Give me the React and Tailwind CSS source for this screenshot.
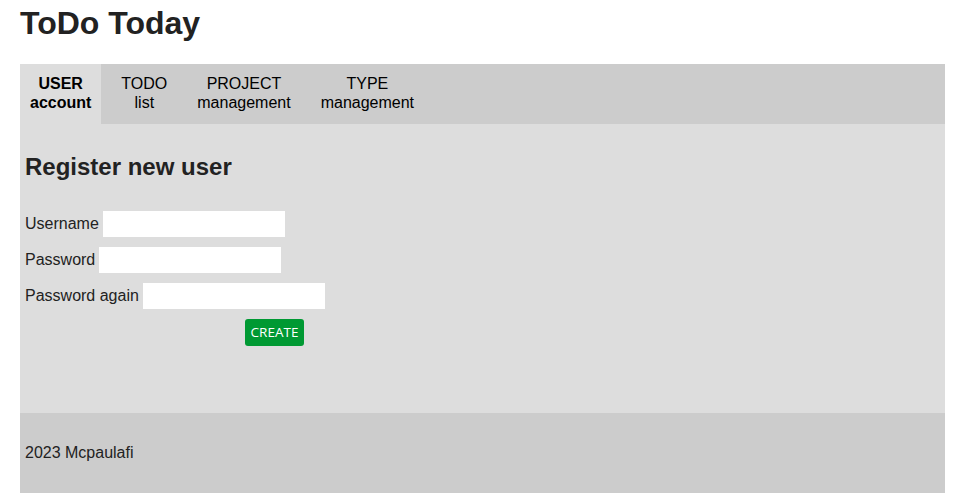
import React, { useState } from "react";

const tabs = [
  { top: "USER", bottom: "account" },
  { top: "TODO", bottom: "list" },
  { top: "PROJECT", bottom: "management" },
  { top: "TYPE", bottom: "management" },
];

const Field = ({ label, type = "text" }) => (
  <div className="flex items-center mb-[10px]">
    <label className="text-[16px] mr-[4px]">{label}</label>
    <input type={type} className="w-[182px] h-[26px] bg-white border-0 outline-none px-1" />
  </div>
);

const App = () => {
  const [active, setActive] = useState(0);

  return (
    <div
      className="min-h-[504px] bg-white text-[#222]"
      style={{ fontFamily: '"Liberation Sans", Arial, sans-serif' }}
    >
      <div className="w-[925px] ml-[20px]">
        <h1 className="text-[32px] leading-[37px] font-bold pt-[5px] mb-[22px]">ToDo Today</h1>

        <nav className="flex gap-[10px] bg-[#cccccc] h-[60px]">
          {tabs.map((t, i) => (
            <button
              key={t.top + t.bottom}
              onClick={() => setActive(i)}
              className={`px-[10px] pt-[10px] pb-[12px] text-[16px] leading-[19px] text-black text-center ${
                active === i ? "bg-[#dddddd] font-bold" : ""
              }`}
            >
              <div>{t.top}</div>
              <div>{t.bottom}</div>
            </button>
          ))}
        </nav>

        <main className="bg-[#dddddd] px-[5px] pt-[29px] pb-[67px]">
          <h2 className="text-[24px] leading-[28px] font-bold mb-[30px]">Register new user</h2>
          <Field label="Username" />
          <Field label="Password" type="password" />
          <Field label="Password again" type="password" />
          <button
            className="ml-[220px] w-[59px] h-[27px] bg-[#009933] text-white text-[13.5px] rounded-[3px]"
            style={{ fontFamily: '"Open Sans", "Noto Sans", sans-serif' }}
          >
            CREATE
          </button>
        </main>

        <footer className="bg-[#cccccc] h-[80px] flex items-center px-[5px] text-[16px]">
          2023 Mcpaulafi
        </footer>
      </div>
    </div>
  );
};

export default App;
